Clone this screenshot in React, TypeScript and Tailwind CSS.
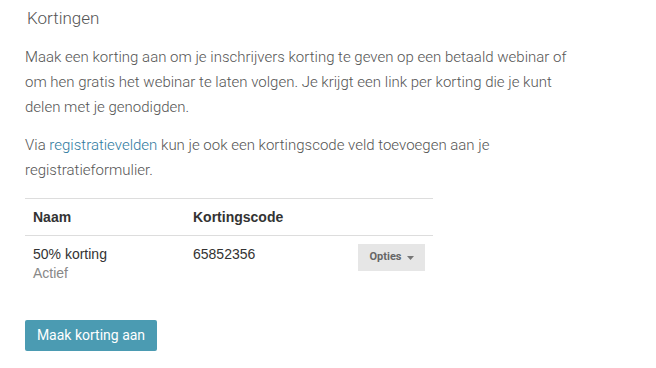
import React from "react";

export default function App() {
  return (
    <div className="w-[656px] h-[368px] bg-white overflow-hidden">
      <div className="px-[25px] pt-[8px]">
        <h1 className="pl-[2px] text-[17px] leading-[20px] font-light text-[#555] font-['Roboto_Light','Roboto',sans-serif]">
          Kortingen
        </h1>
        <div className="mt-[17px] w-[560px] text-[15px] leading-[25px] font-light text-[#555] font-['Roboto_Light','Roboto',sans-serif]">
          <p>
            Maak een korting aan om je inschrijvers korting te geven op een betaald webinar of om hen gratis het webinar te laten volgen. Je krijgt een link per korting die je kunt delen met je genodigden.
          </p>
          <p className="mt-[13px]">
            Via <a className="text-[#2f7aa0]">registratievelden</a> kun je ook een kortingscode veld toevoegen aan je registratieformulier.
          </p>
        </div>
        <div className="mt-[15px] w-[408px] border-t border-[#dddddd] font-['Liberation_Sans',Arial,sans-serif] text-[14px] text-[#333]">
          <div className="flex border-b border-[#dddddd] pt-[8px] pb-[8px] leading-[20px] font-bold">
            <div className="w-[168px] pl-[8px]">Naam</div>
            <div>Kortingscode</div>
          </div>
          <div className="flex items-start pt-[8px] pb-[8px]">
            <div className="w-[168px] pl-[8px] pt-[1px] leading-[19px]">
              <div>50% korting</div>
              <div className="text-[#888]">Actief</div>
            </div>
            <div className="flex-1 pt-[1px] leading-[19px]">65852356</div>
            <button className="mr-[8px] h-[27px] w-[67px] bg-[#e6e6e6] flex items-center justify-center gap-[5px] text-[11px] font-bold text-[#666] font-['Roboto',sans-serif]">
              Opties
              <svg width="7" height="4" viewBox="0 0 7 4">
                <path d="M0 0 L7 0 L3.5 4 Z" fill="#777" />
              </svg>
            </button>
          </div>
        </div>
        <button className="mt-[29px] h-[31px] w-[132px] bg-[#4b9bb2] rounded-[2px] text-white text-[14px] font-['Roboto',sans-serif] flex items-center justify-center">
          Maak korting aan
        </button>
      </div>
    </div>
  );
}
